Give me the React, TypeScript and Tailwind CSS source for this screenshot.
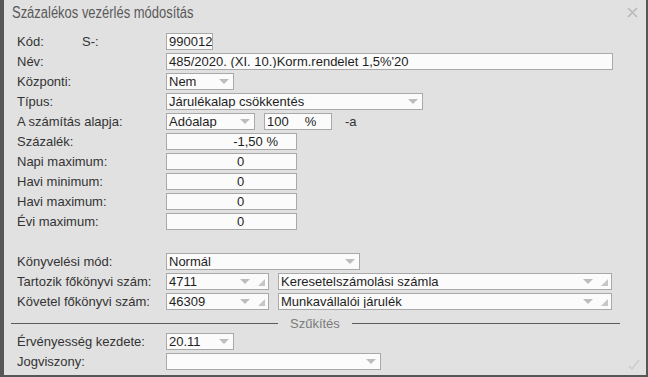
import React from "react"

const font = { fontFamily: '"Liberation Sans", Arial, sans-serif' }

function Arrow() {
  return (
    <svg width="10" height="6" viewBox="0 0 10 6" className="shrink-0">
      <polygon points="0,0 10,0 5,5" fill="#bdbdbd" />
    </svg>
  )
}

function Grip() {
  return (
    <svg width="7" height="7" viewBox="0 0 7 7" className="shrink-0 self-end mb-[3px]">
      <polygon points="7,0 7,7 0,7" fill="#c6c6c6" />
    </svg>
  )
}

type BoxProps = {
  w: string
  value?: string
  select?: boolean
  grip?: boolean
  align?: "left" | "right" | "center"
  children?: React.ReactNode
}

function Box({ w, value, select, grip, align = "left", children }: BoxProps) {
  const alignCls =
    align === "right" ? "justify-end pr-[18px]" : align === "center" ? "justify-center pl-[18px]" : "justify-start pl-[2px]"
  return (
    <div className={`${w} h-[17px] shrink-0 flex items-center border border-[#a9a9a9] bg-[#fbfbfb] text-[13px] text-[#1e1e1e] leading-none`}>
      <div className={`flex-1 flex items-center min-w-0 whitespace-nowrap overflow-hidden ${alignCls}`}>
        {value}
        {children}
      </div>
      {select && (
        <div className={`flex items-center h-full ${grip ? "pr-[3px] gap-[8px]" : "pr-[4px]"}`}>
          <Arrow />
          {grip && <Grip />}
        </div>
      )}
    </div>
  )
}

function Row({ label, children }: { label?: React.ReactNode; children?: React.ReactNode }) {
  return (
    <div className="h-[20px] flex items-start">
      <div className="w-[149px] shrink-0 h-[17px] flex items-center text-[13px] text-[#333] whitespace-nowrap">{label}</div>
      <div className="flex items-center h-[17px]">{children}</div>
    </div>
  )
}

export default function App() {
  return (
    <div style={font} className="relative w-[648px] h-[377px] bg-[#e1e1e1] border-l-4 border-r-2 border-b-2 border-[#575757] overflow-hidden">
      {/* Header */}
      <div className="h-[33px] flex items-start justify-between pl-[8px] pr-[8px] pt-[3px]">
        <span className="inline-block origin-left scale-x-[0.81] text-[16px] leading-[20px] text-[#595959] whitespace-nowrap">
          Százalékos vezérlés módosítás
        </span>
        <svg width="11" height="11" viewBox="0 0 11 11" className="mt-[4px]">
          <path d="M1 1 L10 10 M10 1 L1 10" stroke="#b9b9b9" strokeWidth="1.6" />
        </svg>
      </div>

      {/* Form */}
      <div className="pl-[13px]">
        <Row
          label={
            <div className="flex">
              <span className="w-[65px]">Kód:</span>
              <span>S-:</span>
            </div>
          }
        >
          <Box w="w-[47px]" value="990012" />
        </Row>
        <Row label="Név:">
          <Box w="w-[447px]" value="485/2020. (XI. 10.)Korm.rendelet 1,5%'20" />
        </Row>
        <Row label="Központi:">
          <Box w="w-[68px]" value="Nem" select />
        </Row>
        <Row label="Típus:">
          <Box w="w-[257px]" value="Járulékalap csökkentés" select />
        </Row>
        <Row label="A számítás alapja:">
          <Box w="w-[89px]" value="Adóalap" select />
          <div className="ml-[9px]">
            <Box w="w-[68px]">
              <span>100</span>
              <span className="ml-[16px]">%</span>
            </Box>
          </div>
          <span className="ml-[13px] text-[13px] text-[#333]">-a</span>
        </Row>
        <Row label="Százalék:">
          <Box w="w-[131px]" value="-1,50 %" align="right" />
        </Row>
        <Row label="Napi maximum:">
          <Box w="w-[131px]" value="0" align="center" />
        </Row>
        <Row label="Havi minimum:">
          <Box w="w-[131px]" value="0" align="center" />
        </Row>
        <Row label="Havi maximum:">
          <Box w="w-[131px]" value="0" align="center" />
        </Row>
        <Row label="Évi maximum:">
          <Box w="w-[131px]" value="0" align="center" />
        </Row>
        <Row />
        <Row label="Könyvelési mód:">
          <Box w="w-[194px]" value="Normál" select />
        </Row>
        <Row label="Tartozik főkönyvi szám:">
          <Box w="w-[103px]" value="4711" select grip />
          <div className="ml-[9px]">
            <Box w="w-[334px]" value="Keresetelszámolási számla" select grip />
          </div>
        </Row>
        <Row label="Követel főkönyvi szám:">
          <Box w="w-[103px]" value="46309" select grip />
          <div className="ml-[9px]">
            <Box w="w-[334px]" value="Munkavállalói járulék" select grip />
          </div>
        </Row>
      </div>

      {/* Separator */}
      <div className="h-[20px] flex items-center pl-[7px]">
        <div className="w-[267px] h-px bg-[#5a5a5a]" />
        <span className="mx-[12px] text-[13px] text-[#7a7a7a] leading-none">Szűkítés</span>
        <div className="w-[268px] h-px bg-[#5a5a5a]" />
      </div>

      <div className="pl-[13px]">
        <Row label="Érvényesség kezdete:">
          <Box w="w-[68px]" value="20.11" select />
        </Row>
        <Row label="Jogviszony:">
          <Box w="w-[215px]" select />
        </Row>
      </div>

      <svg width="12" height="11" viewBox="0 0 12 11" className="absolute right-[6px] bottom-[5px]">
        <path d="M1 7 L4 10 L11 1" stroke="#cbcbcb" strokeWidth="1.3" fill="none" />
      </svg>
    </div>
  )
}
